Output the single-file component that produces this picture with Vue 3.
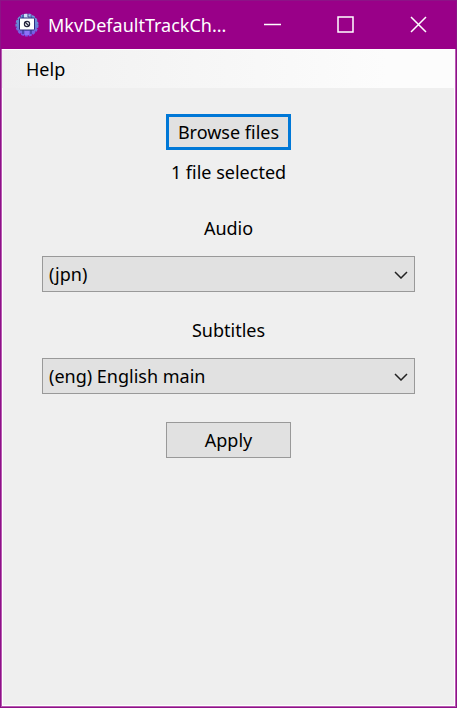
<script setup>
import { ref } from 'vue'

const audio = ref('(jpn)')
const subtitles = ref('(eng) English main')
const audioTracks = ['(jpn)']
const subtitleTracks = ['(eng) English main']
</script>

<template>
  <div class="window">
    <header class="titlebar">
      <svg class="app-icon" viewBox="0 0 24 24" aria-hidden="true">
        <defs>
          <linearGradient id="badge" x1="0" y1="0" x2="0" y2="1">
            <stop offset="0" stop-color="#6fa3dc" />
            <stop offset="0.5" stop-color="#6486d4" />
            <stop offset="1" stop-color="#7a55ee" />
          </linearGradient>
        </defs>
        <circle cx="12" cy="12" r="10.500" fill="url(#badge)" />
        <circle cx="12" cy="12" r="10.800" fill="none" stroke="url(#badge)" stroke-width="1.500" stroke-dasharray="3 1" />
        <path d="M8 17v4M16 17v4" fill="none" stroke="#3b3596" stroke-width="1.300" />
        <path d="M9 1h4l3 3v2H9z" fill="#cfe2f6" />
        <path d="M8 2v3M13 1v3h4" fill="none" stroke="#2f3b8c" />
        <rect x="4.500" y="5" width="15" height="12" rx="1" fill="#fff" stroke="#2f2c80" />
        <path d="M10 18h4v4h-4z" fill="#8f72f8" />
        <circle cx="12" cy="11" r="2.600" fill="#fff" stroke="#26253d" stroke-width="1.200" />
        <path d="M10 9l4 4" stroke="#26253d" stroke-width="1.200" />
      </svg>
      <h1 class="title">MkvDefaultTrackCh...</h1>
      <div class="controls">
        <button type="button" class="control" aria-label="Minimize">
          <svg viewBox="0 0 17 17"><path d="M0 8.500h17" /></svg>
        </button>
        <button type="button" class="control" aria-label="Maximize">
          <svg viewBox="0 0 17 17"><path d="M1 1h15v15H1z" /></svg>
        </button>
        <button type="button" class="control" aria-label="Close">
          <svg viewBox="0 0 17 17"><path d="M1 1l15 15M16 1L1 16" /></svg>
        </button>
      </div>
    </header>
    <div class="client">
      <nav class="menu">
        <button type="button" class="menu-item">Help</button>
      </nav>
      <main class="content">
        <button type="button" class="button focused">Browse files</button>
        <p class="status">1 file selected</p>
        <div class="field">
          <label for="audio">Audio</label>
          <div class="combo">
            <select id="audio" v-model="audio">
              <option v-for="track in audioTracks" :key="track">{{ track }}</option>
            </select>
            <svg class="chevron" viewBox="0 0 14 8" aria-hidden="true"><path d="M1 1l6 6 6-6" /></svg>
          </div>
        </div>
        <div class="field">
          <label for="subtitles">Subtitles</label>
          <div class="combo">
            <select id="subtitles" v-model="subtitles">
              <option v-for="track in subtitleTracks" :key="track">{{ track }}</option>
            </select>
            <svg class="chevron" viewBox="0 0 14 8" aria-hidden="true"><path d="M1 1l6 6 6-6" /></svg>
          </div>
        </div>
        <button type="button" class="button apply">Apply</button>
      </main>
    </div>
  </div>
</template>

<style>
body {
  background: #efefef;
}
</style>

<style scoped>
* {
  box-sizing: border-box;
}
.window {
  min-height: 100vh;
  display: flex;
  flex-direction: column;
  border: 1px solid #8d1287;
  background: #efefef;
  color: #000;
  font: 18px/28px "Noto Sans", "Open Sans", sans-serif;
}
button,
select {
  font: inherit;
  color: inherit;
  margin: 0;
}
.titlebar {
  display: flex;
  align-items: center;
  height: 48px;
  padding: 0 1px 0 14px;
  background: #990088;
  color: #fff;
}
.app-icon {
  width: 24px;
  height: 24px;
  flex: none;
}
.title {
  flex: 1;
  min-width: 0;
  margin: 0 0 0 9px;
  font: inherit;
  white-space: nowrap;
}
.controls {
  display: flex;
}
.control {
  display: flex;
  align-items: center;
  justify-content: center;
  width: 73px;
  height: 48px;
  padding: 0 0 2px;
  border: 0;
  background: none;
}
.control svg {
  width: 17px;
  height: 17px;
  fill: none;
  stroke: #fff;
  stroke-width: 1.5;
}
.client {
  flex: 1;
  border: 1px solid #b95ab3;
  border-top: 0;
  box-shadow: inset 0 0 0 1px #fff;
}
.menu {
  display: flex;
  height: 39px;
  padding: 0 16px;
  background: linear-gradient(90deg, #f0f0f0, #fcfcfc 85%);
  border-top: 1px solid #fff;
}
.menu-item {
  padding: 0 8px;
  border: 0;
  background: none;
}
.content {
  display: flex;
  flex-direction: column;
  align-items: center;
  padding: 26px 40px;
}
.button {
  width: 125px;
  height: 36px;
  padding: 0;
  border: 1px solid #999;
  background: #e1e1e1;
}
.focused {
  border: 3px solid #0078d7;
  outline: 0;
}
.apply {
  margin-top: 4px;
}
.status {
  margin: 8px 0 28px;
}
.field {
  width: 100%;
  margin-bottom: 24px;
  text-align: center;
}
.field label {
  display: block;
  margin-bottom: 14px;
}
.combo {
  position: relative;
}
.combo select {
  display: block;
  width: 100%;
  height: 36px;
  padding: 0 32px 0 6px;
  border: 1px solid #999;
  border-radius: 0;
  background: #e1e1e1;
  appearance: none;
}
.chevron {
  position: absolute;
  top: 15px;
  right: 7px;
  width: 14px;
  height: 8px;
  fill: none;
  stroke: #222;
  stroke-width: 1.5;
  pointer-events: none;
}
</style>
